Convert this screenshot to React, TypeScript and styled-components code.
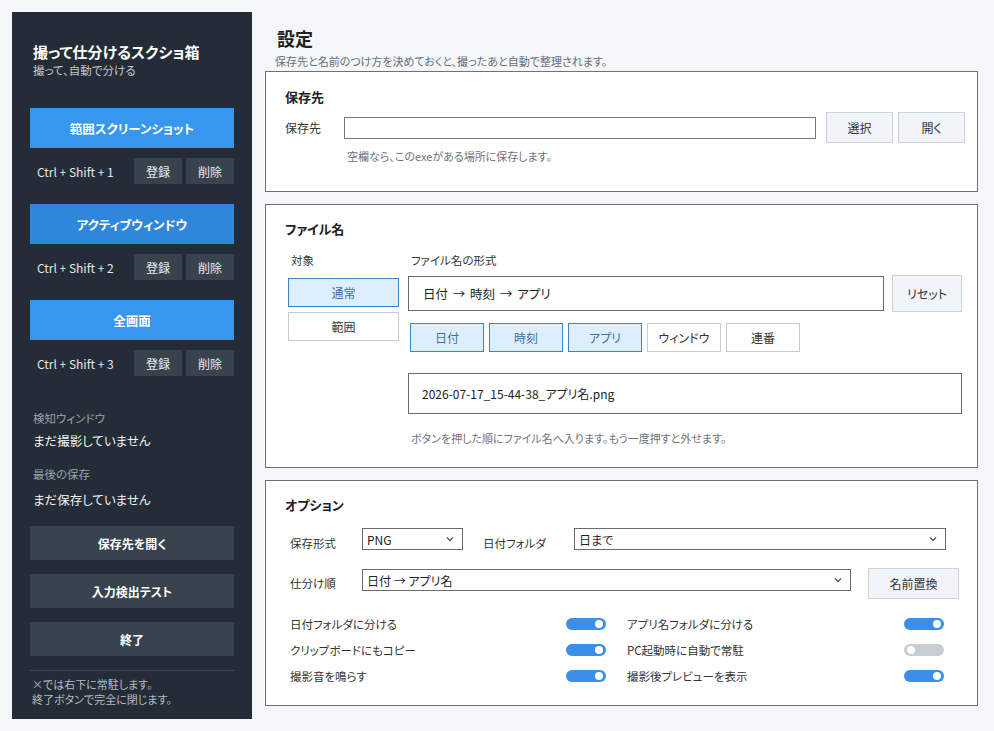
import React from "react";
import styled, { createGlobalStyle } from "styled-components";

const GlobalStyle = createGlobalStyle`
  html, body { margin: 0; padding: 0; background: #f4f6f9; }
  body {
    font-family: "Noto Sans CJK JP", "Noto Sans", sans-serif;
    font-feature-settings: "palt";
    color: #222;
  }
  * { box-sizing: border-box; }
`;

const Root = styled.div`
  display: flex;
  gap: 13px;
  width: 994px;
  height: 731px;
  padding: 12px 16px 12px 12px;
`;

/* ---------- Sidebar ---------- */
const Sidebar = styled.aside`
  width: 240px;
  flex-shrink: 0;
  background: #242d37;
  padding: 31px 18px 0;
  display: flex;
  flex-direction: column;
`;

const AppTitle = styled.div`
  padding-left: 3px;
  font-size: 15px;
  line-height: 18px;
  font-weight: 700;
  color: #ffffff;
`;

const AppSub = styled.div`
  padding-left: 3px;
  margin-top: 2px;
  font-size: 11.5px;
  line-height: 14px;
  color: #c3c9d0;
`;

const ShotGroups = styled.div`
  margin-top: 31px;
  display: flex;
  flex-direction: column;
  gap: 20px;
`;

const ShotGroup = styled.div`
  display: flex;
  flex-direction: column;
  gap: 10px;
`;

const ShotButton = styled.button<{ $dark?: boolean }>`
  height: 40px;
  border: none;
  background: ${(p) => (p.$dark ? "#2f87dc" : "#3796ee")};
  color: #fff;
  font-family: inherit;
  font-feature-settings: "palt";
  font-size: 12.5px;
  font-weight: 700;
  padding: 0;
`;

const KeyRow = styled.div`
  height: 26px;
  display: flex;
  align-items: center;
  gap: 4px;
  padding-left: 7px;
`;

const KeyText = styled.span`
  flex: 1;
  font-size: 12px;
  color: #e3e7ec;
`;

const SmallDarkButton = styled.button`
  width: 48px;
  height: 26px;
  border: none;
  background: #39434e;
  color: #e8ecf0;
  font-family: inherit;
  font-feature-settings: "palt";
  font-size: 12px;
  padding: 0;
`;

const StatusLabel = styled.div<{ $mt: number }>`
  margin-top: ${(p) => p.$mt}px;
  padding-left: 3px;
  font-size: 11.5px;
  line-height: 14px;
  color: #98a2ad;
`;

const StatusValue = styled.div<{ $mt: number }>`
  margin-top: ${(p) => p.$mt}px;
  padding-left: 3px;
  font-size: 12.5px;
  line-height: 14px;
  color: #f2f4f6;
`;

const SideButtons = styled.div`
  margin-top: 19px;
  display: flex;
  flex-direction: column;
  gap: 14px;
`;

const SideButton = styled.button`
  height: 34px;
  border: none;
  background: #39434e;
  color: #fff;
  font-family: inherit;
  font-feature-settings: "palt";
  font-size: 12px;
  font-weight: 700;
  padding: 0;
`;

const Divider = styled.div`
  margin-top: 14px;
  height: 1px;
  background: #3e4853;
`;

const FooterNote = styled.div`
  margin-top: 6px;
  padding-left: 2px;
  font-size: 11px;
  line-height: 15px;
  color: #b4bbc3;
`;

/* ---------- Main ---------- */
const Main = styled.main`
  flex: 1;
  min-width: 0;
  display: flex;
  flex-direction: column;
  padding-top: 14px;
`;

const PageTitle = styled.h1`
  margin: 0;
  padding-left: 12px;
  font-size: 18px;
  line-height: 24px;
  font-weight: 700;
  color: #222;
`;

const PageSub = styled.div`
  margin-top: 4px;
  padding-left: 10px;
  font-size: 11px;
  line-height: 14px;
  color: #676d74;
`;

const Cards = styled.div`
  margin-top: 3px;
  display: flex;
  flex-direction: column;
  gap: 12px;
`;

const Card = styled.section<{ $pt: number; $pb: number; $pr: number }>`
  background: #fff;
  border: 1px solid #717171;
  padding: ${(p) => p.$pt}px ${(p) => p.$pr}px ${(p) => p.$pb}px 19px;
`;

const CardTitle = styled.h2`
  margin: 0;
  font-size: 13px;
  line-height: 14px;
  font-weight: 700;
  color: #222;
`;

const SaveRow = styled.div`
  margin-top: 8px;
  display: flex;
  align-items: center;
  height: 31px;
`;

const FieldLabel = styled.span<{ $w: number }>`
  width: ${(p) => p.$w}px;
  flex-shrink: 0;
  font-size: 12px;
  line-height: 14px;
  color: #333;
`;

const TextInput = styled.div`
  flex: 1;
  min-width: 0;
  height: 22px;
  border: 1px solid #777;
  background: #fff;
`;

const LightButton = styled.button<{ $w: number; $h: number; $ml?: number }>`
  width: ${(p) => p.$w}px;
  height: ${(p) => p.$h}px;
  margin-left: ${(p) => p.$ml ?? 0}px;
  flex-shrink: 0;
  background: #f1f4f8;
  border: 1px solid #cbd2da;
  color: #333;
  font-family: inherit;
  font-feature-settings: "palt";
  font-size: 12px;
  padding: 0;
`;

const ButtonPair = styled.div`
  margin-left: 10px;
  display: flex;
  gap: 5px;
`;

const Hint = styled.div<{ $mt: number; $ml: number }>`
  margin-top: ${(p) => p.$mt}px;
  margin-left: ${(p) => p.$ml}px;
  font-size: 11px;
  line-height: 13px;
  color: #6d737a;
`;

/* filename card */
const NameGrid = styled.div`
  margin-top: 17px;
  margin-left: 3px;
  display: flex;
  gap: 9px;
`;

const TargetCol = styled.div`
  width: 111px;
  display: flex;
  flex-direction: column;
`;

const FormatCol = styled.div`
  flex: 1;
  min-width: 0;
  display: flex;
  flex-direction: column;
`;

const ColLabel = styled.div`
  padding-left: 3px;
  font-size: 11.5px;
  line-height: 14px;
  color: #333;
`;

const TargetList = styled.div`
  margin-top: 11px;
  display: flex;
  flex-direction: column;
  gap: 5px;
`;

const ToggleButton = styled.button<{ $active?: boolean; $w?: number }>`
  width: ${(p) => (p.$w ? `${p.$w}px` : "100%")};
  height: 29px;
  flex-shrink: 0;
  background: ${(p) => (p.$active ? "#ddeefc" : "#fff")};
  border: 1px solid ${(p) => (p.$active ? "#3f84c2" : "#c6ccd3")};
  color: ${(p) => (p.$active ? "#3d6fa5" : "#333")};
  font-family: inherit;
  font-feature-settings: "palt";
  font-size: 12px;
  padding: 0;
`;

const FormatRow = styled.div`
  margin-top: 8px;
  display: flex;
  align-items: center;
  gap: 8px;
`;

const FormatBox = styled.div`
  flex: 1;
  height: 35px;
  border: 1px solid #6b6b6b;
  display: flex;
  align-items: center;
  padding-left: 14px;
  font-size: 12.5px;
  color: #222;
  word-spacing: 2px;
`;

const ChipRow = styled.div`
  margin-top: 11px;
  margin-left: 2px;
  display: flex;
  gap: 5px;
`;

const Preview = styled.div`
  margin-top: 21px;
  height: 41px;
  border: 1px solid #6b6b6b;
  display: flex;
  align-items: center;
  padding-left: 13px;
  font-size: 12px;
  color: #222;
`;

/* options card */
const OptBody = styled.div`
  margin-left: 5px;
  display: flex;
  flex-direction: column;
`;

const OptRow = styled.div<{ $mt: number }>`
  margin-top: ${(p) => p.$mt}px;
  display: flex;
  align-items: flex-start;
`;

const OptLabel = styled.span<{ $w: number; $ml?: number }>`
  width: ${(p) => p.$w}px;
  margin-left: ${(p) => p.$ml ?? 0}px;
  flex-shrink: 0;
  padding-top: 8px;
  font-size: 11.5px;
  line-height: 14px;
  color: #333;
`;

const SelectBox = styled.div<{ $w: number; $mt?: number }>`
  width: ${(p) => p.$w}px;
  height: 22px;
  margin-top: ${(p) => p.$mt ?? 0}px;
  flex-shrink: 0;
  border: 1px solid #6b6b6b;
  background: #fff;
  display: flex;
  align-items: center;
  justify-content: space-between;
  padding: 0 8px 0 4px;
  font-size: 12px;
  color: #222;
`;

const SwitchGrid = styled.div`
  margin-top: 12px;
  display: grid;
  grid-template-columns: 316px 317px;
  column-gap: 21px;
  grid-auto-rows: 26px;
`;

const SwitchItem = styled.div`
  display: flex;
  align-items: center;
  justify-content: space-between;
  font-size: 11.5px;
  color: #333;
`;

const Switch = styled.span<{ $on: boolean }>`
  position: relative;
  width: 40px;
  height: 12px;
  border-radius: 6px;
  background: ${(p) => (p.$on ? "#3b8fe6" : "#c8cdd4")};
  &::after {
    content: "";
    position: absolute;
    top: 2px;
    ${(p) => (p.$on ? "right: 3px;" : "left: 3px;")}
    width: 8px;
    height: 8px;
    border-radius: 50%;
    background: #fff;
  }
`;

const Chevron = () => (
  <svg width="8" height="6" viewBox="0 0 8 6">
    <polyline points="1,1.5 4,4.5 7,1.5" fill="none" stroke="#555" strokeWidth="1.4" />
  </svg>
);

const Select = ({ w, mt, value }: { w: number; mt?: number; value: string }) => (
  <SelectBox $w={w} $mt={mt}>
    <span>{value}</span>
    <Chevron />
  </SelectBox>
);

const shots = [
  { label: "範囲スクリーンショット", key: "Ctrl + Shift + 1", dark: false },
  { label: "アクティブウィンドウ", key: "Ctrl + Shift + 2", dark: true },
  { label: "全画面", key: "Ctrl + Shift + 3", dark: false },
];

const chips = [
  { label: "日付", active: true },
  { label: "時刻", active: true },
  { label: "アプリ", active: true },
  { label: "ウィンドウ", active: false },
  { label: "連番", active: false },
];

const switches = [
  { label: "日付フォルダに分ける", on: true },
  { label: "アプリ名フォルダに分ける", on: true },
  { label: "クリップボードにもコピー", on: true },
  { label: "PC起動時に自動で常駐", on: false },
  { label: "撮影音を鳴らす", on: true },
  { label: "撮影後プレビューを表示", on: true },
];

export default function App() {
  return (
    <>
      <GlobalStyle />
      <Root>
        <Sidebar>
          <AppTitle>撮って仕分けるスクショ箱</AppTitle>
          <AppSub>撮って、自動で分ける</AppSub>
          <ShotGroups>
            {shots.map((s) => (
              <ShotGroup key={s.key}>
                <ShotButton $dark={s.dark}>{s.label}</ShotButton>
                <KeyRow>
                  <KeyText>{s.key}</KeyText>
                  <SmallDarkButton>登録</SmallDarkButton>
                  <SmallDarkButton>削除</SmallDarkButton>
                </KeyRow>
              </ShotGroup>
            ))}
          </ShotGroups>
          <StatusLabel $mt={35}>検知ウィンドウ</StatusLabel>
          <StatusValue $mt={9}>まだ撮影していません</StatusValue>
          <StatusLabel $mt={19}>最後の保存</StatusLabel>
          <StatusValue $mt={12}>まだ保存していません</StatusValue>
          <SideButtons>
            <SideButton>保存先を開く</SideButton>
            <SideButton>入力検出テスト</SideButton>
            <SideButton>終了</SideButton>
          </SideButtons>
          <Divider />
          <FooterNote>
            ×では右下に常駐します。
            <br />
            終了ボタンで完全に閉じます。
          </FooterNote>
        </Sidebar>

        <Main>
          <PageTitle>設定</PageTitle>
          <PageSub>保存先と名前のつけ方を決めておくと、撮ったあと自動で整理されます。</PageSub>
          <Cards>
            <Card $pt={18} $pb={28} $pr={12}>
              <CardTitle>保存先</CardTitle>
              <SaveRow>
                <FieldLabel $w={59}>保存先</FieldLabel>
                <TextInput />
                <ButtonPair>
                  <LightButton $w={67} $h={31}>選択</LightButton>
                  <LightButton $w={67} $h={31}>開く</LightButton>
                </ButtonPair>
              </SaveRow>
              <Hint $mt={7} $ml={62}>空欄なら、このexeがある場所に保存します。</Hint>
            </Card>

            <Card $pt={17} $pb={22} $pr={15}>
              <CardTitle>ファイル名</CardTitle>
              <NameGrid>
                <TargetCol>
                  <ColLabel>対象</ColLabel>
                  <TargetList>
                    <ToggleButton $active>通常</ToggleButton>
                    <ToggleButton>範囲</ToggleButton>
                  </TargetList>
                </TargetCol>
                <FormatCol>
                  <ColLabel>ファイル名の形式</ColLabel>
                  <FormatRow>
                    <FormatBox>日付 → 時刻 → アプリ</FormatBox>
                    <LightButton $w={70} $h={37}>リセット</LightButton>
                  </FormatRow>
                  <ChipRow>
                    {chips.map((c) => (
                      <ToggleButton key={c.label} $active={c.active} $w={74}>
                        {c.label}
                      </ToggleButton>
                    ))}
                  </ChipRow>
                  <Preview>2026-07-17_15-44-38_アプリ名.png</Preview>
                  <Hint $mt={18} $ml={3}>
                    ボタンを押した順にファイル名へ入ります。もう一度押すと外せます。
                  </Hint>
                </FormatCol>
              </NameGrid>
            </Card>

            <Card $pt={17} $pb={16} $pr={15}>
              <CardTitle>オプション</CardTitle>
              <OptBody>
                <OptRow $mt={16}>
                  <OptLabel $w={72}>保存形式</OptLabel>
                  <Select w={101} value="PNG" />
                  <OptLabel $w={91} $ml={20}>日付フォルダ</OptLabel>
                  <Select w={372} value="日まで" />
                </OptRow>
                <OptRow $mt={18}>
                  <OptLabel $w={72}>仕分け順</OptLabel>
                  <Select w={489} mt={1} value="日付 → アプリ名" />
                  <LightButton $w={91} $h={31} $ml={17}>
                    名前置換
                  </LightButton>
                </OptRow>
                <SwitchGrid>
                  {switches.map((s) => (
                    <SwitchItem key={s.label}>
                      <span>{s.label}</span>
                      <Switch $on={s.on} />
                    </SwitchItem>
                  ))}
                </SwitchGrid>
              </OptBody>
            </Card>
          </Cards>
        </Main>
      </Root>
    </>
  );
}
